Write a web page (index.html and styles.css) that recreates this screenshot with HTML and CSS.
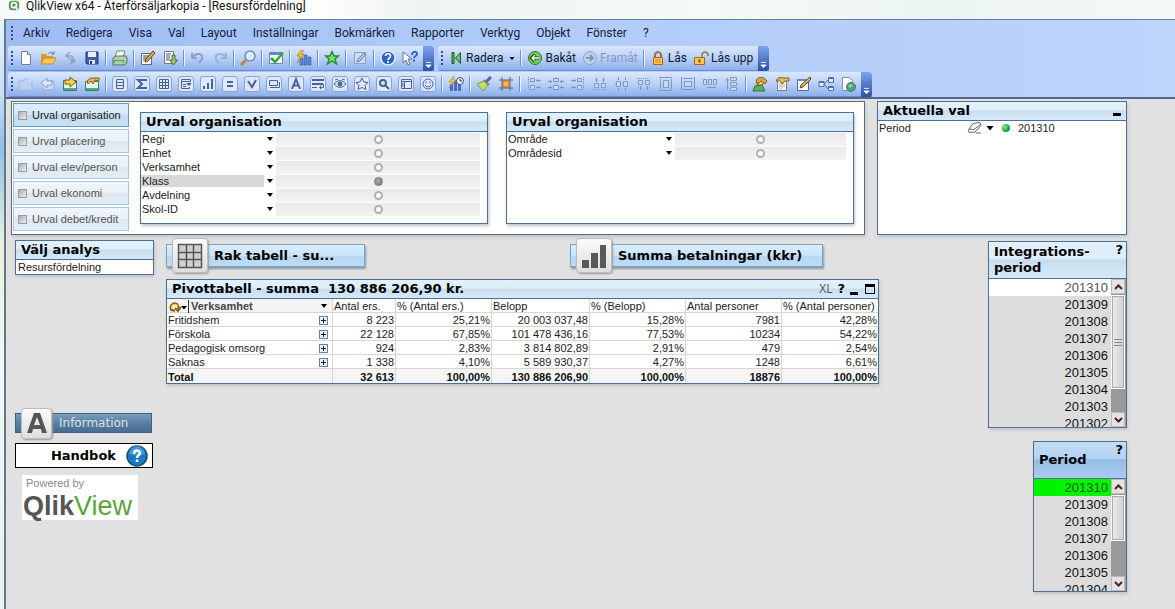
FILE: index.html
```html
<!DOCTYPE html>
<html lang="sv">
<head>
<meta charset="utf-8">
<title>QlikView x64 - Återförsäljarkopia - [Resursfördelning]</title>
<link rel="stylesheet" href="styles.css">
</head>
<body>
<header class="titlebar">
  <svg class="app-icon" viewBox="0 0 14 14" aria-hidden="true"><rect x="1" y="1" width="12" height="11" rx="4" fill="#4c9a4a"/><circle cx="7" cy="6" r="3" fill="none" stroke="#fff" stroke-width="2"/><path d="M8 7l3 4" stroke="#fff" stroke-width="2"/></svg>
  <span class="app-title">QlikView x64 - Återförsäljarkopia - [Resursfördelning]</span>
</header>
<div class="window">
<nav class="commands">
  <div class="menu">
    <span class="grip"></span>
    <button>Arkiv</button><button>Redigera</button><button>Visa</button><button>Val</button><button>Layout</button><button>Inställningar</button><button>Bokmärken</button><button>Rapporter</button><button>Verktyg</button><button>Objekt</button><button>Fönster</button><button>?</button>
  </div>
  <div class="bars">
    <div class="toolbar">
      <span class="grip"></span>
      <button aria-label="Ny"><svg viewBox="0 0 16 16"><path d="M3.500 1.500h6l3 3v10h-9z" fill="#fff" stroke="#777f90"/><path d="M9.500 1.500v3h3" fill="#dde" stroke="#777f90"/></svg></button>
      <button aria-label="Öppna"><svg viewBox="0 0 16 16"><path d="M1 14V4h5l1 2h6v8z" fill="#d99a2b"/><path d="M1 14l3-6h12l-3 6z" fill="#ffc65a" stroke="#c98a2a"/><path d="M8 4q3-4 6 0m0-3v3h-3" fill="none" stroke="#6b7da0"/></svg></button>
      <button aria-label="Uppdatera"><svg viewBox="0 0 16 16"><path d="M8 2L4 6l4 3M4 6h6l3 5-4 3M13 11H8M9 8l2 3-3 3" fill="none" stroke="#91a3c4" stroke-width="1.500"/></svg></button>
      <button aria-label="Spara"><svg viewBox="0 0 16 16"><path d="M2 2h12v12H3l-1-1z" fill="#3f5fae" stroke="#23397c"/><path d="M4 2h8v5H4z" fill="#e9effb"/><path d="M5 10h6v4H5z" fill="#dfe6f4"/><path d="M6 11h2v3H6z" fill="#23397c"/></svg></button>
      <i class="sep"></i>
      <button aria-label="Skriv ut"><svg viewBox="0 0 16 16"><path d="M5 1h8l-2 6H3z" fill="#fff" stroke="#6f8a70"/><path d="M1 8l3-2h10l1 2v5l-3 2H1z" fill="#b8ccb4" stroke="#58715a"/><path d="M2 10h10v3H2z" fill="#4fa64b"/><path d="M3 12h8" stroke="#fff"/></svg></button>
      <i class="sep"></i>
      <button aria-label="Redigera skript"><svg viewBox="0 0 16 16"><path d="M1.500 3.500h10v11h-10z" fill="#fff" stroke="#667"/><path d="M3 6h6M3 8h4M3 10h3" stroke="#344"/><path d="M13 1l2 2-7 8-3 1 1-3z" fill="#e2a661" stroke="#6c3c18"/></svg></button>
      <button aria-label="Kör skript"><svg viewBox="0 0 16 16"><path d="M2.500 1.500h9v12h-9z" fill="#fff" stroke="#778"/><path d="M4 4h5M4 6h4M4 8h4M4 10h3" stroke="#456"/><path d="M10 5h3v5h2.500L11.500 15l-4-5H10z" fill="#9ac06c" stroke="#4c6c35"/></svg></button>
      <i class="sep"></i>
      <button aria-label="Ångra"><svg viewBox="0 0 16 16"><path d="M2 3v5h5M2 8c4-6 12-5 10 1q-1 2-3 4" fill="none" stroke="#8ca0c8" stroke-width="2"/></svg></button>
      <button aria-label="Gör om"><svg viewBox="0 0 16 16"><path d="M14 3v5H9m5 0c-4-6-12-5-10 1q1 2 3 4" fill="none" stroke="#9aafd5" stroke-width="2"/></svg></button>
      <i class="sep"></i>
      <button aria-label="Sök"><svg viewBox="0 0 16 16"><path d="M6 10l-5 5" stroke="#c5813c" stroke-width="3"/><circle cx="10" cy="6" r="5" fill="#cfeeff" stroke="#6d8db5" stroke-width="1.500"/><path d="M7 5q1-2 3-2" stroke="#fff" fill="none"/></svg></button>
      <i class="sep"></i>
      <button aria-label="Aktuella val"><svg viewBox="0 0 16 16"><path d="M1.500 2.500h13v11h-13z" fill="#fff" stroke="#6885b9"/><path d="M2 3h12v2H2z" fill="#5c86cf"/><path d="M3 8l4 4 8-9" fill="none" stroke="#31a52b" stroke-width="2.500"/></svg></button>
      <i class="sep"></i>
      <button aria-label="Snabbdiagram"><svg viewBox="0 0 16 16"><path d="M4 15V8h3v7zM8 15V5h3v10zM12 15V7h3v8z" fill="#5c86d8" stroke="#26488e" stroke-width=".5"/><path d="M5 0L1 6h3l-3 7 7-9H5l3-4z" fill="#ffc32c" stroke="#aa6b17" stroke-width=".6"/></svg></button>
      <i class="sep"></i>
      <button aria-label="Lägg till bokmärke"><svg viewBox="0 0 16 16"><path d="M8 1.500l2 4.500h4.500l-3.500 3 1.500 5-4.500-3-4.500 3L5 9 1.500 6H6z" fill="#7be06c" stroke="#24872e" stroke-width="1.300"/></svg></button>
      <i class="sep"></i>
      <button aria-label="Anteckningar"><svg viewBox="0 0 16 16"><path d="M2.500 2.500h11v11h-11z" fill="#cbdcf7" stroke="#8c9fc2"/><path d="M12 3L6 9l-1 3 3-1 6-7z" fill="#b7c5df" stroke="#7183a7"/></svg></button>
      <i class="sep"></i>
      <button aria-label="Hjälp"><svg viewBox="0 0 16 16"><circle cx="8" cy="8" r="7" fill="#2e62c4" stroke="#d9e7ff" stroke-width="1.500"/><path d="M5.500 6c0-3 5-3 5 0 0 2-2.500 2-2.500 4M8 11v2" fill="none" stroke="#fff" stroke-width="1.700"/></svg></button>
      <button aria-label="Förklara"><svg viewBox="0 0 16 16"><path d="M1 2v11l3-3 2 5 2-1-2-5h4z" fill="#fff" stroke="#66748f"/><path d="M10 5c0-4 5-4 5-1 0 2-3 2-3 4m0 1.500v2" fill="none" stroke="#3362bd" stroke-width="2"/></svg></button>
      <button class="more" aria-label="Fler knappar"><svg viewBox="0 0 8 8"><path d="M1 1h6M1 4h6L4 7z" fill="#fff" stroke="#fff"/></svg></button>
    </div>
    <div class="toolbar">
      <span class="grip"></span>
      <button class="text"><svg viewBox="0 0 16 16"><path d="M4 2.500h2v11H4z" fill="#67c95f" stroke="#254d2b"/><path d="M12.500 2.500v11L7.500 8z" fill="#67c95f" stroke="#1e5830"/></svg>Radera<svg class="drop" viewBox="0 0 7 4"><path d="M0 0h7L3.500 4z"/></svg></button>
      <i class="sep"></i>
      <button class="text"><svg viewBox="0 0 16 16"><circle cx="8" cy="8" r="6.500" fill="#71ce57" stroke="#277834"/><path d="M12 8H5m3-3.500L4.500 8 8 11.500" fill="none" stroke="#173d25" stroke-width="3"/><path d="M12 8H5m3-3L5 8l3 3" fill="none" stroke="#fff" stroke-width="1.300"/></svg>Bakåt</button>
      <button class="text" disabled><svg viewBox="0 0 16 16"><circle cx="8" cy="8" r="6.500" fill="#bdd0f1" stroke="#91a2c3"/><path d="M4 8h7M8 5l3 3-3 3" fill="none" stroke="#8394b5" stroke-width="2"/></svg>Framåt</button>
      <i class="sep"></i>
      <button class="text"><svg viewBox="0 0 16 16"><path d="M5 7V4q3-4 6 0v3" fill="none" stroke="#8e7654" stroke-width="2"/><path d="M3.500 7.500h9v7h-9z" fill="#ffc74f" stroke="#aa6716"/><path d="M5 10h6M5 12h6" stroke="#d38c22"/></svg>Lås</button>
      <button class="text"><svg viewBox="0 0 16 16"><path d="M9 7V4q3-4 6 0v2" fill="none" stroke="#8e7654" stroke-width="1.500"/><path d="M1.500 7.500h10v7h-10z" fill="#ffc74f" stroke="#aa6716"/><path d="M6.500 9.500v3" stroke="#754914" stroke-width="2"/></svg>Lås upp</button>
      <button class="more" aria-label="Fler knappar"><svg viewBox="0 0 8 8"><path d="M1 1h6M1 4h6L4 7z" fill="#fff" stroke="#fff"/></svg></button>
    </div>
  </div>
  <div class="bars">
    <div class="toolbar">
      <span class="grip"></span>
      <button aria-label="Lägg till flik"><svg viewBox="0 0 16 16"><path d="M1 14V5h4l1-2h8v11z" fill="#bed0ee" stroke="#a2b6d9"/><path d="M12 1v6M9 4h6" stroke="#d7e4fa"/></svg></button>
      <button aria-label="Flytta flik vänster"><svg viewBox="0 0 16 16"><path d="M5 5h9v9H3v-3" fill="#c8d9f3" stroke="#93a6c9"/><path d="M7 2L1 7l6 5V9h5V5H7z" fill="#dce8fa" stroke="#8da0c4"/></svg></button>
      <button aria-label="Flytta flik höger"><svg viewBox="0 0 16 16"><path d="M1.500 4.500h13v10h-13z" fill="#e5f2ed" stroke="#3b796f"/><path d="M2 13h12" stroke="#55aa80" stroke-width="2"/><path d="M8 1l6 5-6 5V8H3V4h5z" fill="#ffd249" stroke="#77571b"/></svg></button>
      <button aria-label="Egenskaper för flik"><svg viewBox="0 0 16 16"><path d="M1.500 5.500h13v9h-13z" fill="#e5f2ed" stroke="#3b796f"/><path d="M2 13h12" stroke="#55aa80" stroke-width="2"/><path d="M3 5q3-4 8-3h4v3l-4-1-2 4-2-3-3 3z" fill="#e3b94f" stroke="#82601b"/></svg></button>
      <i class="sep"></i>
      <button class="boxed" aria-label="Listbox"><svg viewBox="0 0 14 14"><path d="M3.500 2.500h7v9h-7zM4 5.500h6M4 8.500h6"/></svg></button>
      <button class="boxed" aria-label="Statistikbox"><svg viewBox="0 0 14 14"><path class="bold" d="M11 4V3H3l4 4-4 4h8v-1"/></svg></button>
      <button class="boxed" aria-label="Tabellbox"><svg viewBox="0 0 14 14"><path d="M2.500 2.500h9v9h-9zM5.500 2v9M8.500 2v9M2 5.500h9M2 8.500h9"/></svg></button>
      <button class="boxed" aria-label="Multibox"><svg viewBox="0 0 14 14"><path d="M2.500 2.500h9v2h-9zM2.500 4v7.500h8V10M4 7.500h3M4 9.500h3"/><path class="solid" d="M8 6.500h4l-2 2z"/></svg></button>
      <button class="boxed" aria-label="Diagram"><svg viewBox="0 0 14 14"><path class="bold" d="M3 12V9M7 12V6M11 12V2"/></svg></button>
      <button class="boxed" aria-label="Inmatningsbox"><svg viewBox="0 0 14 14"><path class="bold" d="M4 5h6M4 9h6"/></svg></button>
      <button class="boxed" aria-label="Aktuella val-box"><svg viewBox="0 0 14 14"><path class="bold" d="M3 4l4 6 4-7"/></svg></button>
      <button class="boxed" aria-label="Knapp"><svg viewBox="0 0 14 14"><path d="M2.500 3.500h8v5h-8zM3 10.500h9.500V5"/></svg></button>
      <button class="boxed" aria-label="Textobjekt"><svg viewBox="0 0 14 14"><path class="bold" d="M3 12L7 2l4 10M4 8.500h6"/></svg></button>
      <button class="boxed" aria-label="Linje eller pil"><svg viewBox="0 0 14 14"><path class="bold" d="M1 3h12M1 7h11"/><path d="M1 10.500h5M12.500 7v3.500H9M10.500 8.500l-2 2 2 2"/></svg></button>
      <button class="boxed" aria-label="Skjutreglage"><svg viewBox="0 0 14 14"><path d="M1 7q6-7 12 0-6 7-12 0M2 3l3-1M9 2l3 1"/><circle class="solid" cx="7" cy="7" r="2"/></svg></button>
      <button class="boxed" aria-label="Bokmärkesobjekt"><svg viewBox="0 0 14 14"><path d="M7 1l2 4 4 .5-3 3 1 4-4-2-4 2 1-4-3-3L5 5z"/></svg></button>
      <button class="boxed" aria-label="Sökobjekt"><svg viewBox="0 0 14 14"><circle class="bold" cx="6" cy="6" r="3"/><path class="bold" d="M8 8l4 4"/></svg></button>
      <button class="boxed" aria-label="Behållare"><svg viewBox="0 0 14 14"><path d="M2.500 2.500h10v9h-10zM2 4.500h10M5.500 4v7M2 7h3M2 9h3"/></svg></button>
      <button class="boxed" aria-label="Eget objekt"><svg viewBox="0 0 14 14"><circle cx="7" cy="7" r="5"/><path d="M4 8q3 4 6 0M5 4.500v2M9 4.500v2"/></svg></button>
      <i class="sep"></i>
      <button aria-label="Tidsdiagram"><svg viewBox="0 0 16 16"><path d="M2 15V8h3v7zM6 15V5h3v10zM10 15V8h3v7z" fill="#476dbc"/><path d="M6 0L1 6h4l-4 6 7-8H5z" fill="#ffc83f" stroke="#95682a" stroke-width=".5"/><circle cx="12" cy="5" r="3.500" fill="#fff" stroke="#334c80"/><path d="M12 3v2h2" stroke="#222" fill="none"/></svg></button>
      <i class="sep"></i>
      <button aria-label="Formatmålare"><svg viewBox="0 0 16 16"><path d="M15 1l-5 5" stroke="#6f55a5" stroke-width="3"/><path d="M1 8l7-3 4 4-5 6z" fill="#c3df6a" stroke="#7d9a4a"/><path d="M8 4l5 5" stroke="#77886a" stroke-width="2"/></svg></button>
      <button aria-label="Rutnät"><svg viewBox="0 0 16 16"><path d="M4 1v14M12 1v14M1 4h14M1 12h14" stroke="#50627d"/><path d="M5 5h6v6H5z" fill="#ffb44c" stroke="#ae721e"/></svg></button>
      <i class="sep"></i>
      <button class="align" aria-label="Vänsterjustera"><svg viewBox="0 0 16 16"><path class="dots" d="M2.500 1v14"/><path d="M4.500 2.500h4v3h-4zM4.500 9.500h4v4h-4zM10 4.500h5M12 3v3M10 11.500h5M12 10v3"/></svg></button>
      <button class="align" aria-label="Centrera vågrätt"><svg viewBox="0 0 16 16"><path class="dots" d="M8 1v14"/><path d="M5.500 2.500h5v3h-5zM5.500 9.500h5v4h-5zM0 5.500h4M2.500 4v3M12 5.500h4M13.500 4v3M0 11.500h4M2.500 10v3M12 11.500h4M13.500 10v3"/></svg></button>
      <button class="align" aria-label="Högerjustera"><svg viewBox="0 0 16 16"><path class="dots" d="M13.500 1v14"/><path d="M7.500 2.500h4v3h-4zM7.500 9.500h4v4h-4zM1 4.500h5M4 3v3M1 11.500h5M4 10v3"/></svg></button>
      <button class="align" aria-label="Underkant"><svg viewBox="0 0 16 16"><path class="dots" d="M1 13.500h14"/><path d="M2.500 7.500h4v4h-4zM9.500 7.500h4v4h-4zM4.500 2v4M3 4h3M11.500 2v4M10 4h3"/></svg></button>
      <button class="align" aria-label="Centrera lodrätt"><svg viewBox="0 0 16 16"><path class="dots" d="M1 8h14"/><path d="M2.500 5.500h4v5h-4zM9.500 5.500h4v5h-4zM4.500 1v3M11.500 1v3M4.500 12v3M11.500 12v3"/></svg></button>
      <button class="align" aria-label="Överkant"><svg viewBox="0 0 16 16"><path class="dots" d="M1 2.500h14"/><path d="M2.500 4.500h4v4h-4zM9.500 4.500h4v4h-4zM4.500 10v4M3 12h3M11.500 10v4M10 12h3"/></svg></button>
      <button class="align" aria-label="Fördela höjd"><svg viewBox="0 0 16 16"><path d="M1 1.500h13M1 14.500h13M5.500 4.500h5v7h-5zM2.500 3v10M13.500 3v10"/></svg></button>
      <button class="align" aria-label="Fördela bredd"><svg viewBox="0 0 16 16"><path d="M1.500 1v13M14.500 1v13M4.500 5.500h7v5h-7zM3 2.500h10M3 13.500h10"/></svg></button>
      <button class="align" aria-label="Lika avstånd i rad"><svg viewBox="0 0 16 16"><path d="M1.500 3.500h3v5h-3zM6.500 3.500h3v5h-3zM11.500 3.500h3v5h-3zM5 11.500h9"/></svg></button>
      <button class="align" aria-label="Lika avstånd i kolumn"><svg viewBox="0 0 16 16"><path d="M6.500 1.500h6v3h-6zM6.500 6.500h6v3h-6zM6.500 11.500h6v3h-6zM3.500 2v12M1 4h4"/></svg></button>
      <i class="sep"></i>
      <button aria-label="Användarinställningar"><svg viewBox="0 0 16 16"><circle cx="8" cy="6" r="3.500" fill="#f3c88f" stroke="#8a5b29"/><path d="M1 15l2-5 7-1 3 6z" fill="#5fb153" stroke="#326f34"/><path d="M4 5q2-5 8-3l3 3-2 3-4-3-3 3z" fill="#dda24a" stroke="#875c20"/></svg></button>
      <button aria-label="Dokumentegenskaper"><svg viewBox="0 0 16 16"><path d="M3.500 4.500h9v10h-9z" fill="#fff" stroke="#777"/><path d="M5 8h6M5 10h6M5 12h4" stroke="#9aa"/><path d="M2 5q2-5 8-3h5v3h-4L8 8 6 5z" fill="#e2b953" stroke="#806323"/></svg></button>
      <button aria-label="Flikegenskaper"><svg viewBox="0 0 16 16"><path d="M1.500 3.500h11v11h-11z" fill="#fff" stroke="#5366a5"/><path d="M1 4h12" stroke="#6786d0" stroke-width="2"/><path d="M14 1l1 2-8 8-3 1 1-3z" fill="#eab55a" stroke="#624318"/></svg></button>
      <button aria-label="Tabellstruktur"><svg viewBox="0 0 16 16"><path d="M1 5.500h5v5H1zM10.500 1.500h5v5h-5zM10.500 10.500h5v4h-5zM6 8l4-4M6 8l4 5" fill="#e6f0ff" stroke="#4d70b6"/><path d="M10 2.500h6M10 11.500h6M1 6.500h5" stroke="#4d70b6"/></svg></button>
      <button aria-label="Webbvy"><svg viewBox="0 0 16 16"><path d="M2.500 1.500h7l3 3v10h-10z" fill="#fff" stroke="#8494b4"/><circle cx="11" cy="11" r="4.500" fill="#45a487" stroke="#397a76"/><path d="M8 10q3-4 5 0l-3 2z" fill="#86db7c"/></svg></button>
      <button class="more" aria-label="Fler knappar"><svg viewBox="0 0 8 8"><path d="M1 1h6M1 4h6L4 7z" fill="#fff" stroke="#fff"/></svg></button>
    </div>
  </div>
</nav>
<main class="sheet">
  <div class="selections">
    <section class="container">
      <div class="tabs">
        <label class="tab active"><input type="checkbox">Urval organisation</label>
        <label class="tab"><input type="checkbox">Urval placering</label>
        <label class="tab"><input type="checkbox">Urval elev/person</label>
        <label class="tab"><input type="checkbox">Urval ekonomi</label>
        <label class="tab"><input type="checkbox">Urval debet/kredit</label>
      </div>
      <div class="panel multibox">
        <h2 class="caption">Urval organisation</h2>
        <div class="fields wide">
          <label class="field"><span>Regi</span><i class="arrow"></i><span class="band"><input type="radio" name="org"></span></label>
          <label class="field"><span>Enhet</span><i class="arrow"></i><span class="band"><input type="radio" name="org"></span></label>
          <label class="field"><span>Verksamhet</span><i class="arrow"></i><span class="band"><input type="radio" name="org"></span></label>
          <label class="field"><span class="excluded">Klass</span><i class="arrow"></i><span class="band"><input type="radio" name="org" checked></span></label>
          <label class="field"><span>Avdelning</span><i class="arrow"></i><span class="band"><input type="radio" name="org"></span></label>
          <label class="field"><span>Skol-ID</span><i class="arrow"></i><span class="band"><input type="radio" name="org"></span></label>
        </div>
      </div>
      <div class="panel multibox">
        <h2 class="caption">Urval organisation</h2>
        <div class="fields narrow">
          <label class="field"><span>Område</span><i class="arrow"></i><span class="band"><input type="radio" name="area"></span></label>
          <label class="field"><span>Områdesid</span><i class="arrow"></i><span class="band"><input type="radio" name="area"></span></label>
        </div>
      </div>
    </section>
    <section class="panel current">
      <h2 class="caption">Aktuella val<button class="minimize" aria-label="Minimera"></button></h2>
      <div class="current-row">
        <span class="current-name">Period</span>
        <button aria-label="Rensa"><svg width="14" height="12" viewBox="0 0 14 12"><path d="M5 1.500l7-1 1 3-6 6.500-6 .5L.500 8z" fill="#fff" stroke="#59657e"/><path d="M1 7l5 .5L13 2M8 11h5" fill="none" stroke="#59657e"/></svg></button>
        <i class="arrow big"></i><i class="led"></i><span>201310</span>
      </div>
    </section>
  </div>
  <div class="analysis">
    <aside class="side">
      <section class="panel">
        <h2 class="caption">Välj analys</h2>
        <div class="choice">Resursfördelning</div>
      </section>
      <button class="plate info"><span class="tile"><svg width="22" height="22" viewBox="0 0 22 22"><path d="M1 21L8 1h6l7 20h-5l-1-4H7l-1 4zM8 13h6l-3-8z" fill="#555" fill-rule="evenodd"/></svg></span><span>Information</span></button>
      <button class="manual"><span>Handbok</span><svg width="22" height="22" viewBox="0 0 22 22"><circle cx="11" cy="11" r="10" fill="#1879c4" stroke="#174b77" stroke-width="1.500"/><path d="M3 9a8 8 0 0 1 16 0q-8 3-16 0" fill="#55b3e8" opacity=".6"/><path d="M8 9c0-5 6-4 6-1 0 2-3 2-3 5m0 1.500v2.500" fill="none" stroke="#fff" stroke-width="2.500"/></svg></button>
      <div class="brand"><small>Powered by</small><div class="logo"><b>Qlik</b>View</div></div>
    </aside>
    <section class="center">
      <div class="launchers">
        <button class="plate straight"><span class="tile"><svg width="26" height="26" viewBox="0 0 26 26"><path d="M1.500 1.500h23v23h-23zM9.500 1v24M16.500 1v24M1 9.500h24M1 16.500h24" fill="#d0d0d0" stroke="#555" stroke-width="1.500"/></svg></span><span>Rak tabell - su...</span></button>
        <button class="plate sums"><span class="tile"><svg width="26" height="26" viewBox="0 0 26 26"><path d="M1 17h7v8H1zM10 10h7v15h-7zM19 2h6v23h-6z" fill="#595959"/></svg></span><span>Summa betalningar (kkr)</span></button>
      </div>
      <div class="panel pivot">
        <h2 class="caption">Pivottabell - summa&nbsp; 130 886 206,90 kr.
          <span class="tools"><button class="xl">XL</button><button class="help">?</button><button class="minimize" aria-label="Minimera"></button><button class="maximize" aria-label="Maximera"></button></span>
        </h2>
        <table>
          <colgroup><col class="dim"><col class="count"><col><col class="sum"><col><col><col></colgroup>
          <thead><tr>
            <th class="dimension"><div class="cell"><button class="cycle" aria-label="Växla dimension"><svg width="20" height="13" viewBox="0 0 20 13"><path d="M3 11C-1 6 4 2 8 4c2 2 2 4 1 6M6 8l3 3 3-4M1 9l5 2" fill="none" stroke="#8a6012" stroke-width="2"/><path d="M3 9C1 5 6 3 9 6" fill="none" stroke="#f5c93b" stroke-width="1.500"/><path d="M12 6h6l-3 3.500z"/><path d="M19.500 0v13" stroke="#333"/></svg></button>Verksamhet<i class="arrow"></i></div></th>
            <th>Antal ers.</th><th>% (Antal ers.)</th><th>Belopp</th><th>% (Belopp)</th><th>Antal personer</th><th>% (Antal personer)</th>
          </tr></thead>
          <tbody>
            <tr><td><div class="cell">Fritidshem<button class="expand" aria-label="Expandera"></button></div></td><td>8 223</td><td>25,21%</td><td>20 003 037,48</td><td>15,28%</td><td>7981</td><td>42,28%</td></tr>
            <tr><td><div class="cell">Förskola<button class="expand" aria-label="Expandera"></button></div></td><td>22 128</td><td>67,85%</td><td>101 478 436,16</td><td>77,53%</td><td>10234</td><td>54,22%</td></tr>
            <tr><td><div class="cell">Pedagogisk omsorg<button class="expand" aria-label="Expandera"></button></div></td><td>924</td><td>2,83%</td><td>3 814 802,89</td><td>2,91%</td><td>479</td><td>2,54%</td></tr>
            <tr><td><div class="cell">Saknas<button class="expand" aria-label="Expandera"></button></div></td><td>1 338</td><td>4,10%</td><td>5 589 930,37</td><td>4,27%</td><td>1248</td><td>6,61%</td></tr>
          </tbody>
          <tfoot><tr><td>Total</td><td>32 613</td><td>100,00%</td><td>130 886 206,90</td><td>100,00%</td><td>18876</td><td>100,00%</td></tr></tfoot>
        </table>
      </div>
    </section>
    <aside class="periods">
      <section class="panel listbox integration">
        <h2 class="caption tall"><span>Integrations-<br>period</span><button class="help">?</button></h2>
        <div class="list">
          <ul><li class="possible">201310</li><li>201309</li><li>201308</li><li>201307</li><li>201306</li><li>201305</li><li>201304</li><li>201303</li><li>201302</li></ul>
          <div class="scroll"><button aria-label="Upp"><svg viewBox="0 0 9 6"><path d="M1 5l3.500-3.500L8 5"/></svg></button><div class="track"><div class="thumb long"></div></div><button aria-label="Ned"><svg viewBox="0 0 9 6"><path d="M1 1l3.500 3.500L8 1"/></svg></button></div>
        </div>
      </section>
      <section class="panel listbox period">
        <h2 class="caption tall strong"><span>Period</span><button class="help">?</button></h2>
        <div class="list">
          <ul><li class="selected">201310</li><li>201309</li><li>201308</li><li>201307</li><li>201306</li><li>201305</li><li>201304</li></ul>
          <div class="scroll"><button aria-label="Upp"><svg viewBox="0 0 9 6"><path d="M1 5l3.500-3.500L8 5"/></svg></button><div class="track"><div class="thumb"></div></div><button aria-label="Ned"><svg viewBox="0 0 9 6"><path d="M1 1l3.500 3.500L8 1"/></svg></button></div>
        </div>
      </section>
    </aside>
  </div>
</main>
</div>
</body>
</html>
```

FILE: styles.css
```css
* { box-sizing: border-box; }
html, body { height: 100%; }
body { margin: 0; overflow: hidden; display: flex; flex-direction: column; font: 11px/14px "Liberation Sans", Arial, sans-serif; color: #222; background: linear-gradient(#f2fafa 0, #c4dcf4 16%, #8fc0e6 24%, #e8f2dc 40%, #eef8f6 60%, #e4f4ee); }
button { border: 0; padding: 0; margin: 0; background: none; font: inherit; color: inherit; flex: none; }
input { margin: 0; appearance: none; flex: none; }
h2, ul { margin: 0; padding: 0; list-style: none; }
svg { display: block; flex: none; }

.titlebar { height: 19px; flex: none; display: flex; align-items: flex-start; gap: 5px; padding-left: 7px; background: linear-gradient(90deg, #f6fbfa, #fff 8%, #fff 26%, #eef4f2 36%, #f5faf6 60%, #ecf4f3 80%, #f4f9f5); }
.app-icon { width: 14px; height: 12px; }
.app-title { font: 12px/12px Roboto, "Open Sans", sans-serif; color: #111; }

.window { flex: 1; min-height: 0; display: flex; flex-direction: column; margin-left: 4px; border-left: 2px solid #68788c; border-top: 1px solid #6a7da8; background: #e1e1e1; }
.commands { display: flex; flex-direction: column; gap: 1px; padding-left: 2px; background: linear-gradient(90deg, #9fbcf3, #afcbfa 40%, #bdd4fb); border-bottom: 2px solid #53658f; flex: none; }
.menu { display: flex; align-items: center; height: 25px; font: 12px/16px Roboto, "Open Sans", sans-serif; color: #14223d; }
.menu button { padding: 0 8px; }
.grip { flex: none; width: 7px; height: 16px; background: radial-gradient(circle, #2f4f9a 1px, transparent 1px) 2px 0 / 4px 4px repeat-y; }
.bars { display: flex; gap: 4px; }
.toolbar { height: 25px; display: flex; align-items: center; background: linear-gradient(#dbe8fd, #b9d0f8 50%, #8db0ea); border-bottom: 1px solid #6b8bcd; border-radius: 3px 0 0 3px; font: 12px/16px Roboto, "Open Sans", sans-serif; color: #101a30; }
.toolbar button { width: 22px; height: 22px; display: flex; align-items: center; justify-content: center; }
.toolbar svg { width: 16px; height: 16px; }
.toolbar .text { width: auto; padding: 0 3px 0 3px; gap: 2px; }
.toolbar .text:disabled { color: #8497bd; }
.toolbar .text .drop { width: 6px; height: 3px; margin-left: 4px; }
.sep { flex: none; width: 1px; height: 16px; margin: 0 3px 0 2px; background: #6b8fd6; box-shadow: 1px 0 #eef5ff; }
.toolbar .more { width: 11px; height: 25px; margin-left: 2px; padding-bottom: 2px; align-items: flex-end; background: linear-gradient(#7ba4ee, #2c50a4); border-radius: 0 3px 3px 0; }
.toolbar .more svg { width: 7px; height: 8px; }
.boxed svg { padding: 0; border: 1px solid #8fa2ca; border-radius: 3px; background: #dce8fc; fill: none; stroke: #4a629b; stroke-width: 1; }
.boxed .bold { stroke-width: 2; }
.boxed .solid { fill: #4a629b; }
.align svg { fill: #c9daf5; stroke: #8296bb; stroke-width: 1; }
.align .dots { stroke-dasharray: 1 1; }

.sheet { flex: 1; min-height: 0; overflow: hidden; padding: 2px 48px 0 5px; }
.selections { display: flex; gap: 12px; }
.panel { background: #fff; border: 1px solid #4f6f8e; box-shadow: 1px 2px 3px #bfc4c8; }
.caption { display: flex; align-items: center; height: 19px; padding: 0 5px; font: bold 13px/16px "DejaVu Sans", Verdana, sans-serif; color: #000; white-space: nowrap; background: linear-gradient(#e3f1fc, #dceefa 45%, #c8dcea 50%, #cfe4f5 75%, #d4e8fa); border-bottom: 1px solid #4f6f8e; }
.container { flex: 1; height: 134px; display: flex; align-items: flex-start; padding: 1px 10px 0 1px; background: #fff; border: 1px solid #5d6c7c; box-shadow: 1px 2px 3px #c4c4c4; }
.tabs { display: flex; flex-direction: column; gap: 2px; width: 116px; margin-right: 11px; }
.tab { height: 24px; display: flex; align-items: center; gap: 5px; padding-left: 4px; border: 1px solid #a9c7e2; background: linear-gradient(#eff6fc, #e8f1f8 50%, #dfe7ee 52%, #e4eef6); color: #555; white-space: nowrap; }
.tab.active { border-color: #7098bd; background: linear-gradient(#dceefc, #d3e8f8 50%, #c4dced 52%, #c8e0f4); color: #222; }
.tab input { width: 9px; height: 9px; border: 1px solid #989da2; background: linear-gradient(135deg, #a9adb1, #eee); }
.multibox { flex: 1; height: 112px; margin-top: 9px; }
.multibox + .multibox { margin-left: 18px; }
.fields { padding-right: 7px; }
.field { display: grid; grid-template-columns: 123px 12px 1fr; height: 14px; align-items: center; }
.narrow .field { grid-template-columns: 156px 12px 1fr; }
.field > span:first-child { padding-left: 1px; height: 12px; line-height: 12px; }
.field > .excluded { background: #d8d8d8; }
.arrow { flex: none; width: 6px; height: 4px; background: #000; clip-path: polygon(0 0, 100% 0, 50% 100%); justify-self: center; }
.arrow.big { width: 8px; height: 5px; }
.band { display: flex; height: 13px; align-items: center; justify-content: center; background: linear-gradient(#e9e9e9, #f3f3f3); }
.band input { width: 9px; height: 9px; border: 2px solid #b0b0b0; border-radius: 50%; background: #fff; }
.band input:checked { border: 1px solid #777; background: radial-gradient(circle at 40% 40%, #aaa, #777); }
.current { width: 250px; height: 134px; }
.current .caption { justify-content: space-between; }
.minimize { width: 8px; height: 3px; background: #000; align-self: flex-end; margin-bottom: 4px; }
.current-row { display: flex; align-items: center; height: 14px; padding-left: 1px; }
.current-name { width: 89px; }
.current-row .arrow { margin: 0 8px 0 4px; }
.led { width: 8px; height: 8px; border-radius: 50%; background: radial-gradient(circle at 35% 35%, #8df08d, #12a52b 60%); margin-right: 8px; }

.analysis { display: flex; align-items: flex-start; padding: 5px 0 0 4px; }
.side { width: 139px; flex: none; display: flex; flex-direction: column; }
.choice { padding: 0 2px; }
.plate { height: 23px; display: flex; align-items: center; gap: 6px; padding: 0 5px; font: bold 13px/16px "DejaVu Sans", Verdana, sans-serif; color: #000; white-space: nowrap; border: 1px solid #7ba3c6; background: linear-gradient(#dceefc, #c9e3f8 50%, #b8d6ee 52%, #bddcf6); box-shadow: 1px 2px 2px #8997a4; }
.tile { display: grid; place-items: center; width: 36px; height: 35px; border-radius: 4px; border: 1px solid #bcbcbc; background: linear-gradient(#fbfbfb, #dedede); box-shadow: 1px 1px 2px #999; flex: none; }
.info { width: 137px; height: 20px; margin: 138px 0 10px; gap: 7px; border-color: #3e5f80; background: linear-gradient(#7b9cbb, #5b7fa3 50%, #476c92); color: #d5e1ec; font: 12px/16px "DejaVu Sans", Verdana, sans-serif; box-shadow: none; }
.info .tile { width: 31px; height: 31px; }
.manual { width: 138px; height: 25px; display: flex; align-items: center; justify-content: flex-end; gap: 10px; padding-right: 4px; border: 1px solid #000; background: #fff; color: #000; font: bold 13px/16px "DejaVu Sans", Verdana, sans-serif; }
.brand { width: 116px; height: 45px; margin: 7px 0 0 7px; padding: 1px 1px; background: #fff; color: #888; }
.brand small { display: block; padding-left: 3px; font-size: 11px; line-height: 14px; }
.logo { color: #58a639; font-size: 27px; line-height: 32px; white-space: nowrap; }
.logo b { color: #555; }

.center { margin-left: 12px; flex: none; }
.launchers { display: flex; justify-content: space-between; padding: 4px 56px 0 0; margin-bottom: 12px; }
.straight { width: 199px; }
.sums { width: 253px; }
.pivot .caption .tools { margin-left: auto; display: flex; align-items: center; gap: 5px; }
.xl { font: 12px/14px "Open Sans", sans-serif; color: #555; }
.help { font: bold 13px/16px "DejaVu Sans", Verdana, sans-serif; }
.pivot .tools .minimize { margin-bottom: 2px; }
.maximize { width: 10px; height: 10px; border: 1px solid #000; border-top-width: 3px; margin-left: 2px; }
.pivot .caption { padding-right: 3px; }
table { table-layout: fixed; width: 711px; border-collapse: separate; border-spacing: 0; }
col { width: 96px; }
.dim { width: 166px; }
.count { width: 63px; }
.sum { width: 98px; }
th, td { height: 14px; padding: 1px 1px 0; line-height: 12px; border-right: 1px solid #d6d6d6; border-bottom: 1px solid #d6d6d6; text-align: right; white-space: nowrap; }
th { font-weight: normal; text-align: left; }
th:last-child, td:last-child { border-right: 0; }
td:first-child { text-align: left; }
.dimension { font-weight: bold; background: #f3f3f3; padding-left: 2px; color: #444; }
.cell { display: flex; align-items: center; gap: 2px; height: 12px; }
.cell > .arrow, .expand { margin-left: auto; }
.cell > .arrow { margin-right: 4px; }
.expand { width: 9px; height: 9px; margin-right: 3px; border: 1px solid #687f9c; background: linear-gradient(#123, #123) center / 5px 1px no-repeat, linear-gradient(#123, #123) center / 1px 5px no-repeat, #e8f0f8; }
tfoot td { font-weight: bold; background: #f4f4f4; border-bottom: 0; color: #111; }

.periods { margin-left: auto; display: flex; flex-direction: column; align-items: flex-end; gap: 13px; padding-top: 1px; }
.integration { width: 139px; height: 187px; }
.period { width: 94px; height: 151px; }
.listbox { display: flex; flex-direction: column; background: #dcdcdc; }
.tall { height: 37px; flex: none; justify-content: space-between; padding-right: 3px; }
.tall .help { align-self: flex-start; }
.strong { background: linear-gradient(#c3dcf7, #b3d2f4 45%, #95bce5 50%, #a9cbf0); }
.list { flex: 1; min-height: 0; display: flex; }
.list ul { flex: 1; overflow: hidden; }
.list li { height: 17px; padding-right: 3px; text-align: right; font-size: 13px; line-height: 17px; color: #111; background: #dcdcdc; }
.list .possible { background: #fff; color: #555; }
.list .selected { background: #00f400; color: #075a0b; }
.scroll { width: 15px; flex: none; display: flex; flex-direction: column; background: #999; }
.scroll button { width: 14px; height: 15px; display: grid; place-items: center; background: #e6e2e2; border: 1px solid #fff; outline: 1px solid #bbb; outline-offset: -1px; }
.scroll svg { width: 9px; height: 6px; fill: none; stroke: #422; stroke-width: 2; }
.track { flex: 1; padding-top: 1px; }
.thumb { width: 14px; height: 46px; border: 1px solid #fff; background: linear-gradient(90deg, #eee, #cfcfcf); outline: 1px solid #aaa; outline-offset: -2px; }
.long { height: 94px; display: block; background: repeating-linear-gradient(#888 0 1px, transparent 1px 3px) center / 8px 7px no-repeat, linear-gradient(90deg, #eee, #cfcfcf); }
```
